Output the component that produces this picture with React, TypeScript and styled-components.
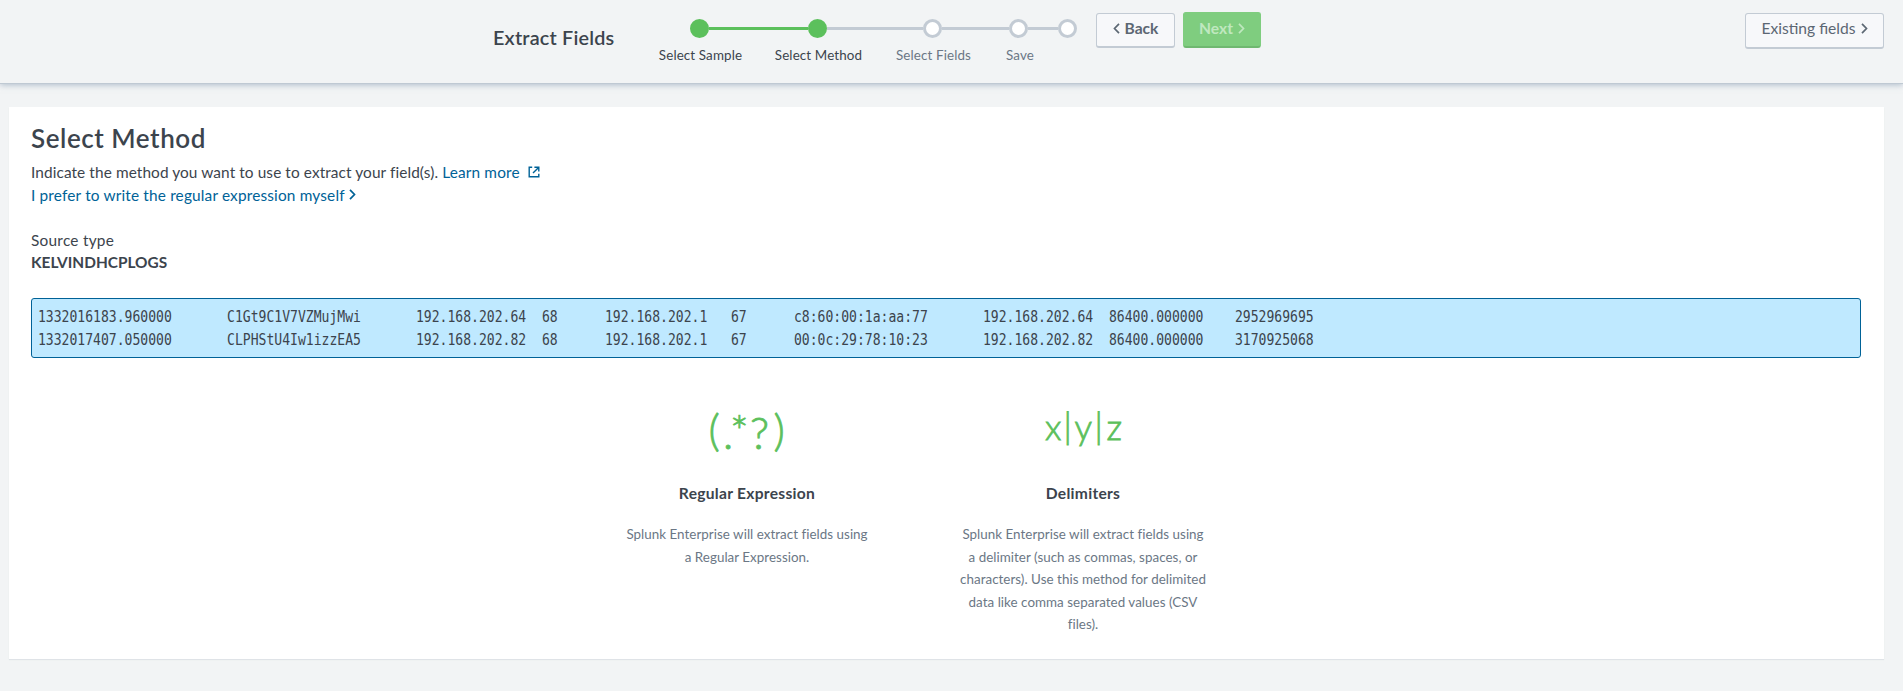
import React from "react";
import styled, { createGlobalStyle, css } from "styled-components";

const GlobalStyle = createGlobalStyle`
  body {
    margin: 0;
    background: #f2f4f5;
    color: #3c444d;
    font-family: Lato, "Open Sans", sans-serif;
    font-size: 15.4px;
    line-height: 22px;
  }
  * { box-sizing: border-box; }
`;

const Page = styled.div`
  display: flex;
  flex-direction: column;
  min-height: 691px;
  overflow: hidden;
`;

const Header = styled.header`
  display: flex;
  align-items: flex-start;
  height: 83px;
  padding: 0 19px 0 493px;
  background: #f2f4f5;
  box-shadow: 0 1px 0 #bfc9d3, 0 2px 6px rgba(140, 158, 180, 0.65);
`;

const Title = styled.h1`
  width: 148px;
  margin: 25px 0 0;
  font-size: 19.8px;
  font-weight: 600;
  line-height: 24px;
  letter-spacing: 0.2px;
  white-space: nowrap;
`;

const Steps = styled.ol`
  display: flex;
  margin: 19px 0 0;
  padding: 0;
  list-style: none;
`;

const Step = styled.li<{ $width: number }>`
  display: flex;
  flex-direction: column;
  align-items: center;
  width: ${(p) => p.$width}px;
`;

const Track = styled.div`
  display: flex;
  align-items: center;
  align-self: stretch;
`;

const Segment = styled.span<{ $tone: "done" | "todo" | "none" }>`
  flex: 1;
  height: 3px;
  background: ${(p) => ({ done: "#5cc05c", todo: "#c3cbd4", none: "transparent" })[p.$tone]};
`;

const Dot = styled.span<{ $done?: boolean }>`
  width: 19px;
  height: 19px;
  border: 3px solid ${(p) => (p.$done ? "#5cc05c" : "#c3cbd4")};
  border-radius: 50%;
  background: ${(p) => (p.$done ? "#5cc05c" : "#fff")};
`;

const StepLabel = styled.span<{ $done?: boolean }>`
  margin-top: 8px;
  padding-left: 3px;
  font-size: 13.4px;
  line-height: 19px;
  letter-spacing: 0.12px;
  white-space: nowrap;
  color: ${(p) => (p.$done ? "#3c444d" : "#6b7785")};
`;

const Button = styled.button<{ $primary?: boolean; $width: number; $bold?: boolean }>`
  display: flex;
  align-items: center;
  justify-content: center;
  gap: 5px;
  width: ${(p) => p.$width}px;
  height: ${(p) => (p.$bold ? 35 : 36)}px;
  margin-top: 13px;
  padding: 0 0 ${(p) => (p.$bold ? 4 : 5)}px;
  border: 1px solid #c3cbd4;
  border-bottom-width: 2px;
  border-radius: 3px;
  background: #f7f8fa;
  color: #5c6773;
  font: ${(p) => (p.$bold ? 700 : 400)} 15.6px/20px Lato, sans-serif;
  white-space: nowrap;
  svg { margin-top: 1px; }
  ${(p) =>
    p.$primary &&
    css`
      height: 36px;
      margin: 12px 0 0 8px;
      border-color: #7fcd7f #7fcd7f #6fb870;
      background: #7fcd7f;
      color: #bfe8bf;
    `}
`;

const Actions = styled.div`
  display: flex;
  margin-left: 12px;
`;

const HeaderEnd = styled.div`
  margin-left: auto;
`;

const Panel = styled.main`
  display: flex;
  flex-direction: column;
  height: 552px;
  margin: 24px 19px 0 9px;
  padding: 15px 23px 0 22px;
  background: #fff;
  box-shadow: 0 1px 1px #dfe3e7;
`;

const Heading = styled.h2`
  margin: 0 0 6px;
  font-size: 26px;
  font-weight: 600;
  line-height: 32px;
  letter-spacing: 0.55px;
`;

const Line = styled.p`
  display: flex;
  align-items: center;
  height: 23px;
  margin: 0;
  letter-spacing: 0.09px;
  white-space: pre;
`;

const Link = styled.a`
  display: inline-flex;
  align-items: center;
  gap: 4px;
  color: #006297;
  letter-spacing: 0.16px;
`;

const Source = styled.dl`
  margin: 23px 0 0;
`;

const SourceLabel = styled.dt`
  line-height: 23px;
  letter-spacing: 0.25px;
`;

const SourceName = styled.dd`
  margin: 0;
  font-weight: 700;
  line-height: 21px;
`;

const Sample = styled.div`
  height: 60px;
  margin-top: 25px;
  padding: 7px 6px;
  border: 1px solid #006297;
  border-radius: 3px;
  background: #bfe9ff;
  overflow: hidden;
`;

const Events = styled.pre`
  width: max-content;
  margin: 0;
  font: 15px/23px "DejaVu Sans Mono", monospace;
  tab-size: 8;
  transform: scaleX(0.872);
  transform-origin: 0 0;
`;

const Methods = styled.div`
  display: flex;
  justify-content: center;
  gap: 86px;
  margin: 42px 62px 0 0;
`;

const Method = styled.section`
  display: flex;
  flex-direction: column;
  align-items: center;
  width: 250px;
  text-align: center;
`;

const Symbol = styled.svg`
  width: 120px;
  height: 72px;
  fill: #5cc05c;
  stroke: #5cc05c;
  stroke-width: 0.8px;
  font-family: Lato, sans-serif;
  font-weight: 300;
`;

const MethodName = styled.h3`
  margin: 9px 0 18px;
  font-size: 15.6px;
  font-weight: 700;
  line-height: 24px;
  letter-spacing: 0.28px;
`;

const MethodText = styled.p`
  margin: 0;
  font-size: 13.4px;
  line-height: 22.5px;
  letter-spacing: 0.03px;
  color: #6b7785;
  white-space: pre-line;
`;

const Chevron = ({ left }: { left?: boolean }) => (
  <svg width="7" height="11" viewBox="0 0 7 11" fill="none" stroke="currentColor" strokeWidth="1.7">
    <path d={left ? "M6 .8 1.5 5.5 6 10.2" : "M1 .8 5.5 5.5 1 10.2"} />
  </svg>
);

const External = () => (
  <svg width="12" height="12" viewBox="0 0 12 12" fill="none" stroke="currentColor" strokeWidth="1.4">
    <path d="M4.2 1.2H1.2v9.6h9.6v-3M6.4 1.2h4.4v4.4M10.6 1.4 5 7" />
  </svg>
);

const steps = [
  { label: "Select Sample", width: 116, done: true },
  { label: "Select Method", width: 120, done: true },
  { label: "Select Fields", width: 110 },
  { label: "Save", width: 63 },
  { label: "", width: 34 },
];

const events = [
  "1332016183.960000\tC1Gt9C1V7VZMujMwi\t192.168.202.64\t68\t192.168.202.1\t67\tc8:60:00:1a:aa:77\t192.168.202.64\t86400.000000\t2952969695",
  "1332017407.050000\tCLPHStU4Iw1izzEA5\t192.168.202.82\t68\t192.168.202.1\t67\t00:0c:29:78:10:23\t192.168.202.82\t86400.000000\t3170925068",
];

export default function App() {
  return (
    <Page>
      <GlobalStyle />
      <Header>
        <Title>Extract Fields</Title>
        <Steps>
          {steps.map((s, i) => (
            <Step key={i} $width={s.width}>
              <Track>
                <Segment $tone={i === 0 ? "none" : s.done ? "done" : "todo"} />
                <Dot $done={s.done} />
                <Segment $tone={i === steps.length - 1 ? "none" : steps[i + 1].done ? "done" : "todo"} />
              </Track>
              <StepLabel $done={s.done}>{s.label}</StepLabel>
            </Step>
          ))}
        </Steps>
        <Actions>
          <Button $width={79} $bold>
            <Chevron left />
            Back
          </Button>
          <Button $width={78} $bold $primary>
            Next
            <Chevron />
          </Button>
        </Actions>
        <HeaderEnd>
          <Button $width={139}>
            Existing fields
            <Chevron />
          </Button>
        </HeaderEnd>
      </Header>
      <Panel>
        <Heading>Select Method</Heading>
        <Line>
          {"Indicate the method you want to use to extract your field(s). "}
          <Link>
            {"Learn more "}
            <External />
          </Link>
        </Line>
        <Line>
          <Link>
            I prefer to write the regular expression myself
            <Chevron />
          </Link>
        </Line>
        <Source>
          <SourceLabel>Source type</SourceLabel>
          <SourceName>KELVINDHCPLOGS</SourceName>
        </Source>
        <Sample>
          <Events>{events.join("\n")}</Events>
        </Sample>
        <Methods>
          <Method>
            <Symbol viewBox="0 0 120 72">
              <text x="21.5 36 43 63 86.5" y="45.5 48.5 48 48.5 45.5" fontSize="44">(.*?)</text>
            </Symbol>
            <MethodName>Regular Expression</MethodName>
            <MethodText>{"Splunk Enterprise will extract fields using\na Regular Expression."}</MethodText>
          </Method>
          <Method>
            <Symbol viewBox="0 0 120 72">
              <text x="22 40.5 51.5 71.5 83.5" y="40 38.8 40 38.8 40" fontSize="35">x|y|z</text>
            </Symbol>
            <MethodName>Delimiters</MethodName>
            <MethodText>
              {"Splunk Enterprise will extract fields using\na delimiter (such as commas, spaces, or\ncharacters). Use this method for delimited\ndata like comma separated values (CSV\nfiles)."}
            </MethodText>
          </Method>
        </Methods>
      </Panel>
    </Page>
  );
}
